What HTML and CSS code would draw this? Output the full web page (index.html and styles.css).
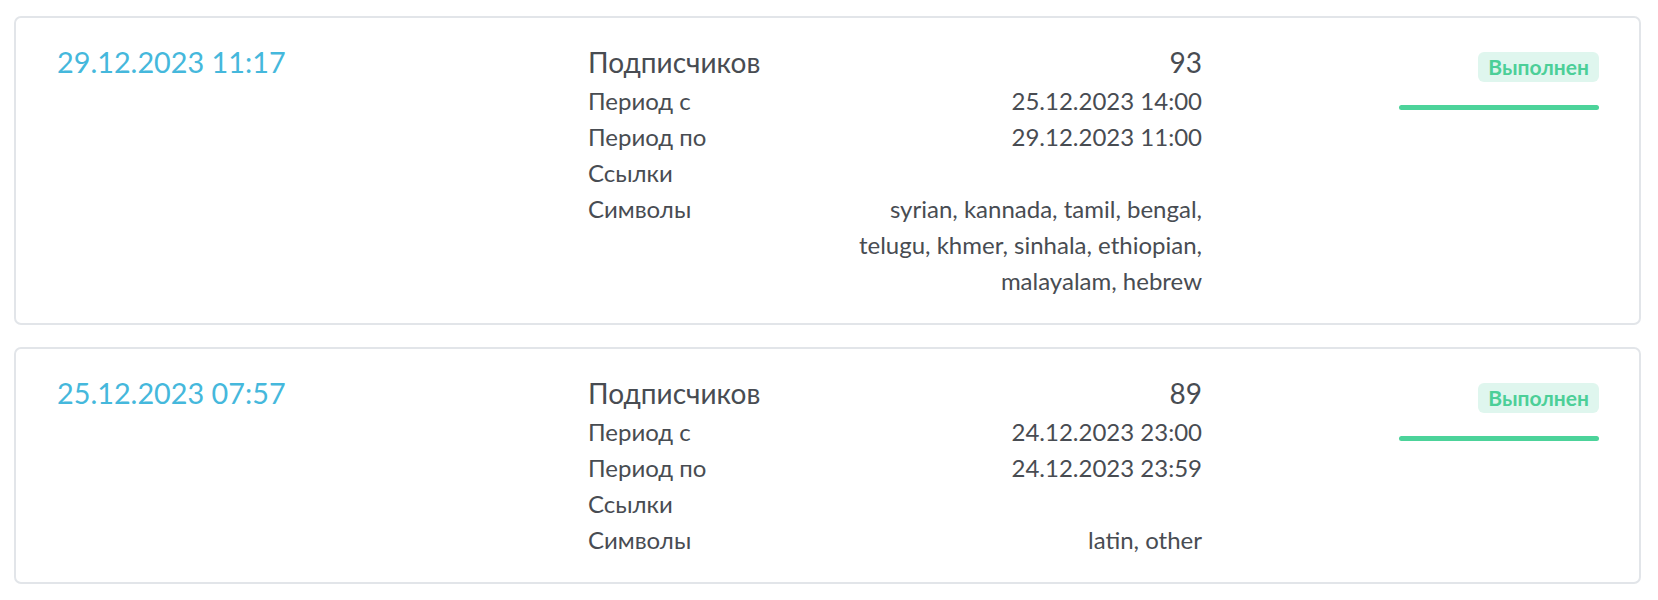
FILE: index.html
```html
<!DOCTYPE html>
<html lang="ru">
<head>
<meta charset="utf-8">
<title>Заказы</title>
<link rel="stylesheet" href="styles.css">
</head>
<body>
<div class="list">
  <div class="card">
    <div class="date">29.12.2023 11:17</div>
    <dl class="details">
      <dt class="lead">Подписчиков</dt><dd class="lead">93</dd>
      <dt>Период с</dt><dd>25.12.2023 14:00</dd>
      <dt>Период по</dt><dd>29.12.2023 11:00</dd>
      <dt>Ссылки</dt><dd></dd>
      <dt>Символы</dt><dd>syrian, kannada, tamil, bengal, telugu, khmer, sinhala, ethiopian, malayalam, hebrew</dd>
    </dl>
    <div class="status">
      <span class="badge">Выполнен</span>
      <div class="bar"></div>
    </div>
  </div>
  <div class="card">
    <div class="date">25.12.2023 07:57</div>
    <dl class="details">
      <dt class="lead">Подписчиков</dt><dd class="lead">89</dd>
      <dt>Период с</dt><dd>24.12.2023 23:00</dd>
      <dt>Период по</dt><dd>24.12.2023 23:59</dd>
      <dt>Ссылки</dt><dd></dd>
      <dt>Символы</dt><dd>latin, other</dd>
    </dl>
    <div class="status">
      <span class="badge">Выполнен</span>
      <div class="bar"></div>
    </div>
  </div>
</div>
</body>
</html>
```
FILE: styles.css
```css
html, body {
  background: #ffffff;
}
body {
  margin: 0;
  padding: 16px 17px 0 14px;
  font-family: "Lato", "Open Sans", "Noto Sans", sans-serif;
  color: #484c52;
}
.list {
  display: flex;
  flex-direction: column;
  gap: 22px;
}
.card {
  border: 2px solid #e2e5e9;
  border-radius: 7px;
  padding: 23px 40px 24px 41px;
  display: grid;
  grid-template-columns: 531px 614px 1fr;
  align-items: start;
}
.date {
  color: #45b8dc;
  font-size: 28.8px;
  line-height: 40px;
  padding-top: 1px;
}
.details {
  margin: 0;
  display: grid;
  grid-template-columns: 1fr 360px;
  font-size: 24px;
  line-height: 36px;
}
.details dt, .details dd {
  margin: 0;
}
.details dd {
  text-align: right;
}
.details .lead {
  font-size: 28px;
  line-height: 42px;
}
.status {
  display: flex;
  flex-direction: column;
  align-items: flex-end;
  gap: 23px;
  padding-top: 11px;
}
.badge {
  background: #dff6ee;
  color: #4ccf98;
  font-weight: 700;
  font-size: 21px;
  line-height: 30px;
  padding: 0 10px;
  border-radius: 6px;
}
.bar {
  width: 200px;
  height: 5px;
  border-radius: 3px;
  background: #4cd39a;
}
```
